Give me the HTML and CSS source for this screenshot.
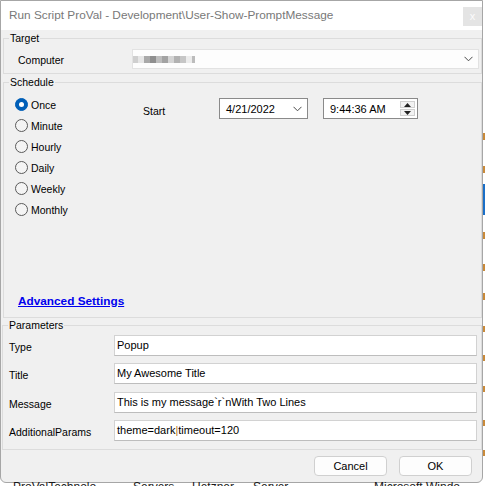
FILE: index.html
```html
<!DOCTYPE html>
<html>
<head>
<meta charset="utf-8">
<link rel="stylesheet" href="styles.css">
</head>
<body>
<div class="screen">
  <div class="window">
    <div class="titlebar">
      <span class="title">Run Script ProVal - Development\User-Show-PromptMessage</span>
      <span class="close">x</span>
    </div>
    <div class="client">
      <fieldset class="group target">
        <legend>Target</legend>
        <div class="target-body">
          <span class="computer-lbl">Computer</span>
          <div class="combo">
            <span class="redact">
              <i class="r1"></i><i class="r2"></i><i class="r3"></i><i class="r4"></i><i class="r5"></i><i class="r6"></i><i class="r7"></i><i class="r8"></i><i class="r9"></i><i class="r10"></i><i class="r11"></i>
            </span>
            <svg class="chev" width="9" height="6" viewBox="0 0 9 6"><path d="M0.5 0.8 L4.5 4.8 L8.5 0.8" fill="none" stroke="#4a4a4a" stroke-width="1"/></svg>
          </div>
        </div>
      </fieldset>
      <fieldset class="group schedule">
        <legend>Schedule</legend>
        <div class="schedule-body">
          <div class="sched-top">
            <div class="radios">
              <div class="radio checked"><span class="circle"></span><span>Once</span></div>
              <div class="radio"><span class="circle"></span><span>Minute</span></div>
              <div class="radio"><span class="circle"></span><span>Hourly</span></div>
              <div class="radio"><span class="circle"></span><span>Daily</span></div>
              <div class="radio"><span class="circle"></span><span>Weekly</span></div>
              <div class="radio"><span class="circle"></span><span>Monthly</span></div>
            </div>
            <span class="start">Start</span>
            <div class="datebox">
              <span>4/21/2022</span>
              <svg class="chev" width="9" height="6" viewBox="0 0 9 6"><path d="M0.5 0.8 L4.5 4.8 L8.5 0.8" fill="none" stroke="#4a4a4a" stroke-width="1"/></svg>
            </div>
            <div class="timebox">
              <span>9:44:36 AM</span>
              <div class="spin">
                <span class="spin-btn"><svg width="7" height="4" viewBox="0 0 7 4"><path d="M0 4 L3.5 0 L7 4 Z" fill="#222"/></svg></span>
                <span class="spin-btn"><svg width="7" height="4" viewBox="0 0 7 4"><path d="M0 0 L3.5 4 L7 0 Z" fill="#222"/></svg></span>
              </div>
            </div>
          </div>
          <a class="advanced" href="#">Advanced Settings</a>
        </div>
      </fieldset>
      <fieldset class="group params">
        <legend>Parameters</legend>
        <div class="params-body">
          <div class="prow"><span class="plbl">Type</span><div class="input">Popup</div></div>
          <div class="prow"><span class="plbl">Title</span><div class="input">My Awesome Title</div></div>
          <div class="prow"><span class="plbl">Message</span><div class="input">This is my message`r`nWith Two Lines</div></div>
          <div class="prow"><span class="plbl">AdditionalParams</span><div class="input">theme=dark<span class="caret">|</span>timeout=120</div></div>
        </div>
      </fieldset>
      <div class="buttons">
        <button class="btn">Cancel</button>
        <button class="btn">OK</button>
      </div>
    </div>
  </div>
  <div class="side"></div>
</div>
<div class="desk">
  <span class="d1">ProValTechnolo</span>
  <span class="d2">Servers</span>
  <span class="d3">Hetzner</span>
  <span class="d4">Server</span>
  <span class="d5">Microsoft Windo</span>
</div>
</body>
</html>
```

FILE: styles.css
```css
* { box-sizing: border-box; }
html, body { margin: 0; padding: 0; }
body {
  width: 485px;
  height: 486px;
  overflow: hidden;
  background: #ffffff;
  font-family: "Liberation Sans", Arial, sans-serif;
  font-size: 10.5px;
  color: #000;
}
.screen { display: flex; }
.window {
  width: 483px;
  height: 483px;
  border: 1px solid #a6a6a6;
  border-radius: 0 0 6px 6px;
  background: #f0f0f0;
  display: flex;
  flex-direction: column;
  overflow: hidden;
}
.titlebar {
  height: 29px;
  flex: none;
  background: #ffffff;
  display: flex;
  align-items: flex-start;
  justify-content: space-between;
  padding-left: 8px;
}
.title {
  font-size: 11.8px;
  color: #787878;
  line-height: 29px;
  white-space: nowrap;
}
.close {
  width: 19px;
  height: 19px;
  margin-top: 6px;
  background: #e4e4e4;
  color: #fbfbfb;
  font-size: 11px;
  line-height: 18px;
  text-align: center;
}
.client {
  flex: 1;
  display: flex;
  flex-direction: column;
}
.group {
  margin: 0;
  padding: 0;
  border: 1px solid #dcdcdc;
  min-width: 0;
}
.group legend {
  padding: 0 1px;
  margin-left: 5px;
  line-height: 14px;
  font-size: 10.5px;
}
.target { margin: 1px 0 0 2px; }
.target-body {
  display: flex;
  align-items: center;
  padding: 4px 2px 4px 14px;
}
.computer-lbl { width: 114px; line-height: 14px; padding-top: 2px; }
.combo {
  flex: 1;
  height: 20px;
  background: #fdfdfd;
  border: 1px solid #e2e2e2;
  display: flex;
  align-items: center;
  justify-content: space-between;
  padding: 0 5px 0 0;
}
.redact { display: flex; height: 7px; margin-top: 1px; }
.redact i { display: block; height: 7px; width: 6px; }
.redact .r1 { background: #cfcfcf; width: 5px; }
.redact .r2 { background: #e6e6e6; }
.redact .r3 { background: #a9a9a9; }
.redact .r4 { background: #8f8f8f; }
.redact .r5 { background: #bdbdbd; }
.redact .r6 { background: #a3a3a3; }
.redact .r7 { background: #d4d4d4; }
.redact .r8 { background: #b2b2b2; }
.redact .r9 { background: #c6c6c6; }
.redact .r10 { background: #ececec; }
.redact .r11 { background: #bcbcbc; width: 3px; }
.chev { display: block; }

.schedule { margin: 1px 0 0 2px; }
.schedule-body {
  display: flex;
  flex-direction: column;
  padding: 5px 0 9px 11px;
}
.sched-top { display: flex; align-items: flex-start; }
.radios { width: 128px; display: flex; flex-direction: column; }
.radio { height: 21px; display: flex; align-items: center; gap: 3px; }
.circle {
  width: 13px;
  height: 13px;
  border-radius: 50%;
  border: 1px solid #5a5a5a;
  background: #f4f4f4;
  display: flex;
  align-items: center;
  justify-content: center;
}
.radio.checked .circle {
  background: #005fb8;
  border-color: #005fb8;
}
.radio.checked .circle::after {
  content: "";
  width: 5px;
  height: 5px;
  border-radius: 50%;
  background: #ffffff;
}
.start { width: 76px; margin-top: 10px; line-height: 14px; }
.datebox, .timebox {
  height: 21px;
  margin-top: 4px;
  background: #ffffff;
  border: 1px solid #8a8a8a;
  display: flex;
  align-items: center;
  justify-content: space-between;
  padding-left: 6px;
  font-size: 11px;
}
.datebox { width: 89px; padding-right: 5px; }
.timebox { width: 95px; margin-left: 15px; padding-right: 2px; }
.spin {
  width: 15px;
  height: 15px;
  display: flex;
  flex-direction: column;
  gap: 1px;
}
.spin-btn {
  flex: 1;
  background: #f2f2f2;
  border: 1px solid #d0d0d0;
  display: flex;
  align-items: center;
  justify-content: center;
}
.spin-btn svg { display: block; }
.advanced {
  margin-top: 74px;
  margin-left: 3px;
  line-height: 14px;
  font-size: 11.8px;
  font-weight: bold;
  color: #0000ee;
  text-decoration: underline;
  align-self: flex-start;
}
.params { margin: 0 0 0 1px; }
.params-body {
  display: flex;
  flex-direction: column;
  gap: 7.3px;
  padding: 3px 4px 8px 6px;
}
.prow { display: flex; align-items: center; }
.plbl { width: 105px; line-height: 14px; padding-top: 3px; }
.input {
  flex: 1;
  height: 21px;
  background: #ffffff;
  border: 1px solid #d2d2d2;
  border-bottom-color: #bdbdbd;
  padding-left: 2px;
  line-height: 19px;
  font-size: 11px;
  white-space: nowrap;
}
.caret { color: #c07810; }
.buttons {
  flex: 1;
  display: flex;
  justify-content: flex-end;
  align-items: flex-start;
  gap: 12px;
  padding: 6px 10px 0 0;
}
.btn {
  width: 73px;
  height: 20px;
  margin: 0;
  padding: 0;
  background: #fdfdfd;
  border: 1px solid #d0d0d0;
  border-radius: 4px;
  font-family: "Liberation Sans", Arial, sans-serif;
  font-size: 11px;
  color: #000;
}
.side {
  width: 2px;
  height: 483px;
  background: linear-gradient(to bottom,
    #ffffff 0 133px, #c98a3a 133px 140px, #ffffff 140px 166px,
    #c98a3a 166px 173px, #ffffff 173px 184px, #1a6fc8 184px 215px,
    #ffffff 215px 232px, #c98a3a 232px 239px, #ffffff 239px 264px,
    #c98a3a 264px 271px, #ffffff 271px 293px, #c98a3a 293px 300px,
    #ffffff 300px 326px, #c98a3a 326px 332px, #ffffff 332px 355px,
    #c98a3a 355px 361px, #ffffff 361px 386px, #c98a3a 386px 392px,
    #ffffff 392px 420px, #c98a3a 420px 426px, #ffffff 426px 450px,
    #c98a3a 450px 456px, #ffffff 456px);
}
.desk {
  display: flex;
  line-height: 9px;
  font-size: 12px;
  color: #1a1a1a;
  white-space: nowrap;
}
.d1 { margin-left: 13px; width: 120px; }
.d2 { width: 59px; }
.d3 { width: 61px; }
.d4 { width: 121px; }
```
